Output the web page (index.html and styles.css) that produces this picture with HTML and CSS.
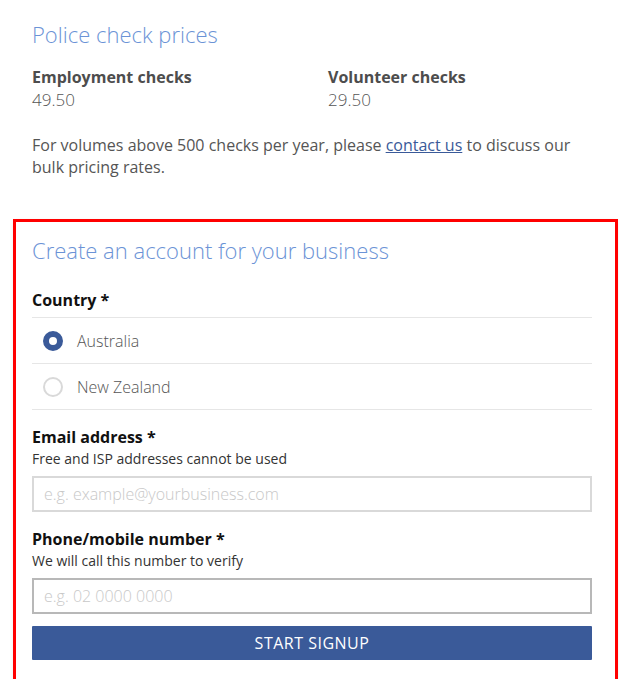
FILE: index.html
```html
<!DOCTYPE html>
<html lang="en">
<head>
<meta charset="utf-8">
<title>Police check prices</title>
<link rel="stylesheet" href="styles.css">
</head>
<body>
<div class="page">
  <section class="prices">
    <h2 class="title">Police check prices</h2>
    <div class="price-grid">
      <div class="price">
        <div class="price-label">Employment checks</div>
        <div class="price-value">49.50</div>
      </div>
      <div class="price">
        <div class="price-label">Volunteer checks</div>
        <div class="price-value">29.50</div>
      </div>
    </div>
    <p class="note">For volumes above 500 checks per year, please <a href="#" class="link">contact us</a> to discuss our bulk pricing rates.</p>
  </section>

  <form class="card">
    <h2 class="title card-title">Create an account for your business</h2>

    <div class="field">
      <div class="label">Country *</div>
      <div class="radio-list">
        <label class="radio-row">
          <span class="radio radio-on"></span>
          <span class="radio-text">Australia</span>
        </label>
        <label class="radio-row">
          <span class="radio"></span>
          <span class="radio-text">New Zealand</span>
        </label>
      </div>
    </div>

    <div class="field field-email">
      <div class="label">Email address *</div>
      <div class="hint">Free and ISP addresses cannot be used</div>
      <input class="input" type="text" placeholder="e.g. example@yourbusiness.com">
    </div>

    <div class="field field-phone">
      <div class="label">Phone/mobile number *</div>
      <div class="hint">We will call this number to verify</div>
      <input class="input input-focus" type="text" placeholder="e.g. 02 0000 0000">
    </div>

    <button class="button" type="button">START SIGNUP</button>
  </form>
</div>
</body>
</html>
```

FILE: styles.css
```css
* { box-sizing: border-box; }
html, body { margin: 0; padding: 0; background: #fff; }
body {
  font-family: "Open Sans", "Lato", sans-serif;
  color: #555;
  font-size: 16px;
}
.page {
  padding: 0 4px 0 16px;
  width: 619px;
}
.prices {
  padding: 19px 16px 0 16px;
}
.title {
  margin: 0;
  font-weight: 300;
  font-size: 22px;
  line-height: 30px;
  color: #6b93d6;
}
.price-grid {
  display: grid;
  grid-template-columns: 296px 1fr;
  margin-top: 17px;
}
.price-label {
  font-weight: 700;
  font-size: 16px;
  line-height: 22px;
  color: #4d4d4d;
}
.price-value {
  font-size: 17px;
  line-height: 24px;
  color: #555;
  font-weight: 300;
}
.note {
  margin: 22px 0 0;
  font-size: 16px;
  line-height: 22px;
  color: #555;
  width: 560px;
}
.link {
  color: #3a5a99;
  text-decoration: underline;
}
.card {
  margin-top: 44px;
  padding: 13px 23px 19px 16px;
  outline: 3px solid #ff0000;
  box-shadow: 0 1px 5px rgba(0,0,0,0.35);
  width: 599px;
  display: flex;
  flex-direction: column;
}
.card-title {
  margin-bottom: 24px;
}
.label {
  font-weight: 700;
  font-size: 16px;
  line-height: 22px;
  color: #111;
}
.radio-list {
  margin-top: 6px;
  border-top: 1px solid #e6e6e6;
}
.radio-row {
  display: flex;
  align-items: center;
  height: 46px;
  border-bottom: 1px solid #e6e6e6;
  padding-left: 11px;
  gap: 14px;
}
.radio {
  width: 20px;
  height: 20px;
  border-radius: 50%;
  border: 2px solid #d9d9d9;
  background: #fff;
}
.radio-on {
  border: 6px solid #3a5a99;
}
.radio-text {
  font-size: 16px;
  color: #555;
  font-weight: 300;
}
.field-email {
  margin-top: 16px;
}
.field-phone {
  margin-top: 16px;
}
.hint {
  font-size: 14px;
  line-height: 22px;
  color: #333;
  margin-bottom: 6px;
}
.input {
  display: block;
  width: 100%;
  height: 36px;
  border: 2px solid #d9d9d9;
  padding: 0 10px;
  font-family: "Open Sans", sans-serif;
  font-size: 16px;
  font-weight: 300;
  color: #555;
  outline: none;
}
.input::placeholder {
  color: #c8c8c8;
}
.input-focus {
  border-color: #b8b8b8;
}
.button {
  margin-top: 12px;
  height: 34px;
  width: 100%;
  background: #3a5a99;
  color: #fff;
  border: 0;
  border-radius: 1px;
  font-family: "Open Sans", sans-serif;
  font-size: 16px;
  font-weight: 400;
  letter-spacing: 0.5px;
}
```
